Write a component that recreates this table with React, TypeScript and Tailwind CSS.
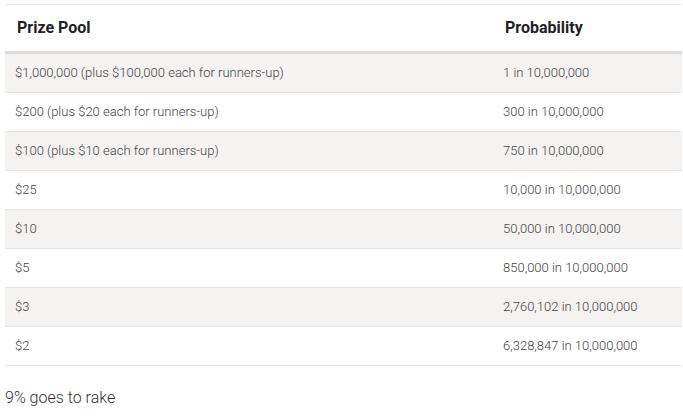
import React from 'react';

const rows: [string, string][] = [
  ['$1,000,000 (plus $100,000 each for runners-up)', '1 in 10,000,000'],
  ['$200 (plus $20 each for runners-up)', '300 in 10,000,000'],
  ['$100 (plus $10 each for runners-up)', '750 in 10,000,000'],
  ['$25', '10,000 in 10,000,000'],
  ['$10', '50,000 in 10,000,000'],
  ['$5', '850,000 in 10,000,000'],
  ['$3', '2,760,102 in 10,000,000'],
  ['$2', '6,328,847 in 10,000,000'],
];

const App: React.FC = () => {
  return (
    <div className="min-h-screen bg-white pl-[5px] pt-1 font-['Roboto',sans-serif]">
      {/* Prize table */}
      <div className="w-[677px] border-t border-[#e8e8e8]">
        <div className="flex h-[49px] items-center border-b-[3px] border-[#dddddd] text-[16px] font-bold text-[#222]">
          <div className="w-[488px] pl-3">Prize Pool</div>
          <div className="pl-3">Probability</div>
        </div>
        {rows.map(([prize, odds], i) => (
          <div
            key={prize}
            className={`flex h-[39px] items-center border-b border-[#e6e6e6] text-[13px] font-light text-[#444] ${
              i % 2 === 0 ? 'bg-[#f4f3f2]' : 'bg-white'
            }`}
          >
            <div className="w-[488px] pl-[10px]">{prize}</div>
            <div className="pl-[10px]">{odds}</div>
          </div>
        ))}
      </div>

      <p className="mt-[20px] text-[16px] font-light text-[#333]">9% goes to rake</p>
    </div>
  );
};

export default App;
